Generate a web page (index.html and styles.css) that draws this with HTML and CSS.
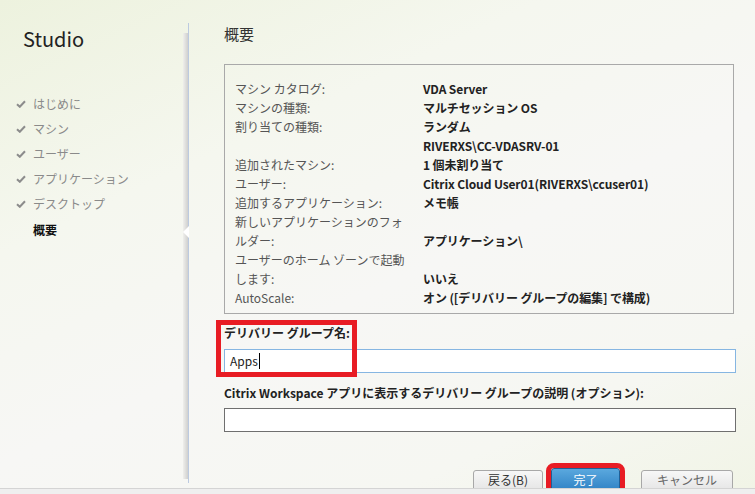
FILE: index.html
```html
<!DOCTYPE html>
<html lang="ja">
<head>
    <meta charset="UTF-8">
    <meta name="viewport" content="width=device-width, initial-scale=1.0">
    <title>Studio - 概要</title>
    <link rel="stylesheet" href="styles.css">
</head>
<body>
    <div class="window">
        <div class="wizard">
            <aside class="sidebar">
                <h1 class="brand">Studio</h1>
                <ul class="steps">
                    <li class="step done"><svg class="check" viewBox="0 0 10 8"><path d="M1 4.2 L3.8 6.8 L9 1.2" /></svg>はじめに</li>
                    <li class="step done"><svg class="check" viewBox="0 0 10 8"><path d="M1 4.2 L3.8 6.8 L9 1.2" /></svg>マシン</li>
                    <li class="step done"><svg class="check" viewBox="0 0 10 8"><path d="M1 4.2 L3.8 6.8 L9 1.2" /></svg>ユーザー</li>
                    <li class="step done"><svg class="check" viewBox="0 0 10 8"><path d="M1 4.2 L3.8 6.8 L9 1.2" /></svg>アプリケーション</li>
                    <li class="step done"><svg class="check" viewBox="0 0 10 8"><path d="M1 4.2 L3.8 6.8 L9 1.2" /></svg>デスクトップ</li>
                    <li class="step current">概要</li>
                </ul>
            </aside>

            <div class="divider">
                <div class="divider-shade"></div>
                <span class="notch"></span>
            </div>

            <main class="content">
                <h2 class="page-title">概要</h2>

                <dl class="summary">
                    <dt>マシン カタログ:</dt>
                    <dd>VDA Server</dd>
                    <dt>マシンの種類:</dt>
                    <dd>マルチセッション OS</dd>
                    <dt>割り当ての種類:</dt>
                    <dd>ランダム</dd>
                    <dt>追加されたマシン:</dt>
                    <dd>RIVERXS\CC-VDASRV-01<br>1 個未割り当て</dd>
                    <dt>ユーザー:</dt>
                    <dd>Citrix Cloud User01(RIVERXS\ccuser01)</dd>
                    <dt>追加するアプリケーション:</dt>
                    <dd>メモ帳</dd>
                    <dt>新しいアプリケーションのフォルダー:</dt>
                    <dd>アプリケーション\</dd>
                    <dt>ユーザーのホーム ゾーンで起動します:</dt>
                    <dd>いいえ</dd>
                    <dt>AutoScale:</dt>
                    <dd>オン ([デリバリー グループの編集] で構成)</dd>
                </dl>

                <div class="field">
                    <label class="field-label">デリバリー グループ名:</label>
                    <div class="textbox focused">Apps<span class="caret"></span></div>
                    <span class="mark"></span>
                </div>

                <div class="field">
                    <label class="field-label">Citrix Workspace アプリに表示するデリバリー グループの説明 (オプション):</label>
                    <div class="textbox"></div>
                </div>

                <div class="actions">
                    <button class="btn">戻る(B)</button>
                    <button class="btn primary">完了</button>
                    <button class="btn cancel">キャンセル</button>
                </div>
            </main>
        </div>
        <div class="statusbar"></div>
    </div>
</body>
</html>
```

FILE: styles.css
```css
body {
    margin: 0;
    font-family: "Noto Sans CJK JP", "Noto Sans", sans-serif;
    font-size: 12px;
    color: #222;
    background: linear-gradient(155deg, #edf2de 0%, #f5f7ef 30%, #f7f7f5 55%, #f6f7f2 80%, #f1f4e6 100%);
}

.window {
    width: 755px;
    height: 494px;
    display: flex;
    flex-direction: column;
    overflow: hidden;
}

.wizard {
    display: flex;
    height: 488px;
    overflow: hidden;
}

/* left column */
.sidebar {
    width: 183px;
    flex-shrink: 0;
}

.brand {
    margin: 25px 0 0 23px;
    font-size: 20px;
    font-weight: normal;
    line-height: 28px;
    color: #222;
}

.steps {
    list-style: none;
    margin: 38px 0 0 0;
    padding: 0 0 0 16px;
}

.step {
    display: flex;
    align-items: center;
    height: 25px;
    color: #8a8a8a;
    font-size: 12px;
}

.check {
    width: 10px;
    height: 8px;
    margin-right: 7px;
    fill: none;
    stroke: #8c8c8c;
    stroke-width: 2;
}

.step.current {
    margin-top: 1px;
    padding-left: 17px;
    color: #111;
    font-weight: bold;
}

/* separator between the steps and the page */
.divider {
    position: relative;
    width: 5px;
    margin-top: 23px;
    height: 460px;
    border-right: 1px solid #bccae0;
    flex-shrink: 0;
}

.divider-shade {
    margin-top: 10px;
    height: 446px;
    background: linear-gradient(to right, #efefec, #d0d0ce);
}

.notch {
    position: absolute;
    top: 203px;
    right: -1px;
    width: 0;
    height: 0;
    border-top: 6px solid transparent;
    border-bottom: 6px solid transparent;
    border-right: 6px solid #ffffff;
}

/* page */
.content {
    flex: 1;
    padding: 24px 19px 0 35px;
    display: flex;
    flex-direction: column;
}

.page-title {
    margin: 0 0 20px 0;
    font-size: 15px;
    font-weight: normal;
    line-height: 20px;
    color: #333;
}

.summary {
    margin: 0 2px 0 0;
    padding: 14px 10px 6px 10px;
    border: 1px solid #a9a9a9;
    display: grid;
    grid-template-columns: 176px 1fr;
    column-gap: 12px;
    align-items: end;
    line-height: 19px;
}

.summary dt {
    margin: 0;
    color: #555;
}

.summary dd {
    margin: 0;
    font-weight: bold;
    color: #222;
    letter-spacing: -0.1px;
}

.field {
    position: relative;
    margin-top: 10px;
}

.field + .field {
    margin-top: 11px;
}

.field-label {
    display: block;
    font-weight: bold;
    line-height: 18px;
    color: #222;
    margin-bottom: 7px;
}

.field + .field .field-label {
    margin-bottom: 6px;
}

.textbox {
    height: 22px;
    border: 1px solid #6f6f6f;
    background: #fff;
    padding-left: 5px;
    line-height: 22px;
    font-size: 12px;
    color: #222;
}

.textbox.focused {
    border-color: #86b6e2;
}

.caret {
    display: inline-block;
    width: 1px;
    height: 16px;
    margin-left: 1px;
    background: #000;
    vertical-align: -3px;
}

/* red annotation frame */
.mark {
    position: absolute;
    left: -8px;
    top: -4px;
    width: 131px;
    height: 47px;
    border: 5px solid #e81c24;
}

.actions {
    display: flex;
    justify-content: flex-end;
    align-items: flex-end;
    margin: 36px 3px 0 0;
}

.btn {
    font-family: inherit;
    font-size: 12px;
    height: 24px;
    padding: 0;
    border: 1px solid #a8a8a8;
    border-radius: 3px 3px 0 0;
    background: linear-gradient(#f7f7f7, #e3e3e3);
    color: #333;
    line-height: 18px;
    padding-bottom: 4px;
    width: 70px;
    cursor: pointer;
}

.btn.primary {
    height: 26px;
    width: 69px;
    margin-left: 8px;
    border-color: #1f5f96;
    background: linear-gradient(#5aa8de, #2b7ec2);
    color: #fff;
    outline: 5px solid #e81c24;
    padding-top: 2px;
}

.btn.cancel {
    width: 92px;
    margin-left: 21px;
    color: #666;
}

.statusbar {
    height: 5px;
    border-top: 1px solid #d4d4d4;
    background: #efefef;
}
```
